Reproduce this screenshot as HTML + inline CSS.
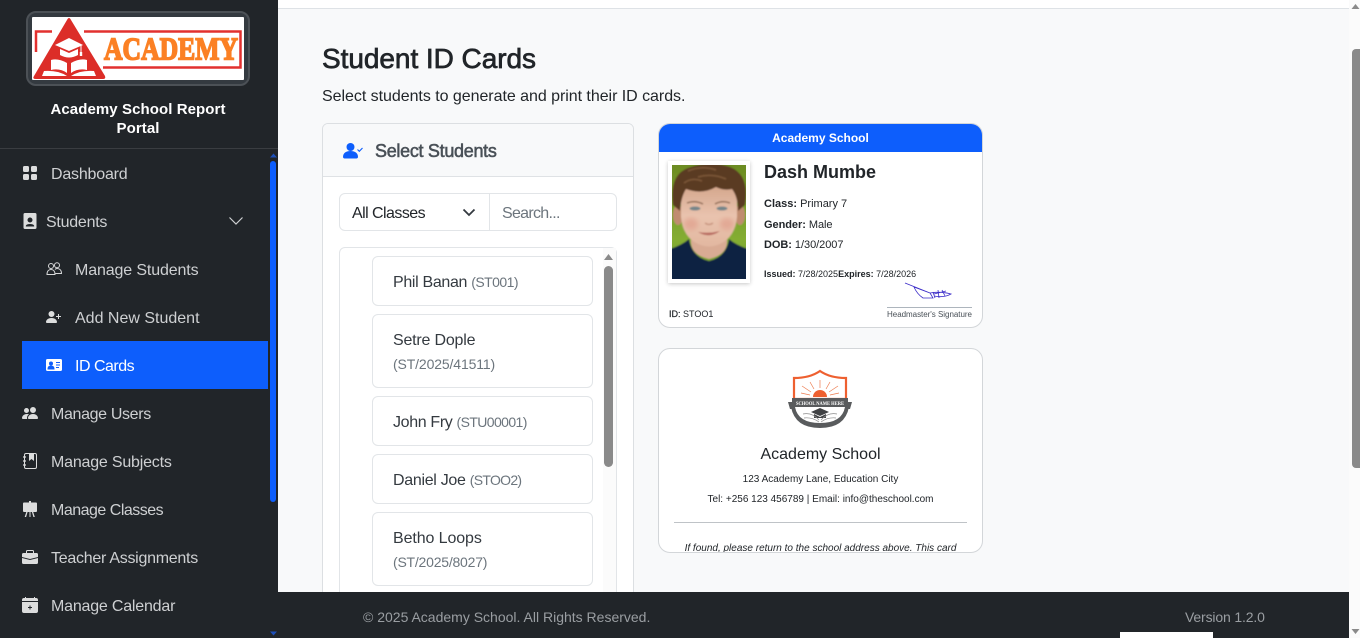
<!DOCTYPE html>
<html lang="en"><head><meta charset="utf-8"><title>Student ID Cards</title>
<style>
*{box-sizing:border-box}
html,body{margin:0;padding:0;width:1360px;height:638px;overflow:hidden;background:#f8f9fa;font-family:"Liberation Sans",Arial,sans-serif;color:#212529}
.a{position:absolute}
.t{position:absolute;white-space:nowrap;line-height:1}
.nav{font-size:16px;color:#ced0d2}
svg{position:absolute;display:block}
.item{position:absolute;left:372px;width:221px;background:#fff;border:1px solid #e2e5e8;border-radius:6px}
.n{font-size:16px;color:#343a40}
.c{font-size:14px;color:#6c757d}
</style></head><body>
<!-- top bar -->
<div class="a" style="left:278px;top:0;width:1074px;height:9px;background:#fff;border-bottom:1px solid #dee2e6"></div>
<!-- page scrollbar -->
<div class="a" style="left:1349px;top:0;width:11px;height:638px;background:#fbfbfb"></div>
<div class="a" style="left:1352px;top:49px;width:8px;height:419px;background:#8a8a8a;border-radius:4px 0 0 4px"></div>
<svg style="left:1351px;top:3px" width="9" height="7"><path d="M4.500 1L8.500 6H.5z" fill="#8a8a8a"/></svg>
<svg style="left:1351px;top:628px" width="9" height="7"><path d="M.5 1h8l-4 5z" fill="#8a8a8a"/></svg>

<!-- sidebar -->
<div class="a" style="left:0;top:0;width:278px;height:638px;background:#212529"></div>
<div class="a" style="left:0;top:148px;width:278px;height:1px;background:#3a3d41"></div>
<div class="a" style="left:26px;top:11px;width:224px;height:75px;background:#343a40;border:2px solid #4c5156;border-radius:10px"></div>
<svg style="left:32px;top:17px" width="212" height="63" viewBox="32 17 212 63">
<rect x="32" y="17" width="212" height="63" fill="#fff" rx="1"/>
<path d="M36 52V31.500H52M84 31.500H240.500V67.500H103" fill="none" stroke="#e2302f" stroke-width="2.500"/>
<path d="M69 18Q70 18 71 20L105 76Q106 79 103 79H36Q32 79 34 76L67 20Q68 18 69 18z" fill="#dc2d28"/>
<path d="M69 38L55 45 69 51 83 45z" fill="#fff"/>
<path d="M60 49V55Q69 60 78 55V49L69 53z" fill="#fff"/>
<path d="M81 45V53" stroke="#fff" stroke-width="1"/><rect x="79.800" y="52" width="2.400" height="4" fill="#fff"/>
<path d="M67 63Q58 58 51 60V70Q60 68 67 73zM71 63Q80 58 87 60V70Q78 68 71 73z" fill="#fff"/>
<path d="M44 71Q58 70 67 76H42zM94 71Q80 70 71 76H96z" fill="#fff"/>
<text x="104" y="59.500" font-family="Liberation Serif" font-weight="700" font-size="32" textLength="134" lengthAdjust="spacingAndGlyphs" fill="#fb8024" stroke="#fb8024" stroke-width="1.600">ACADEMY</text>
</svg>
<div class="t" style="left:0;width:276px;top:100px;text-align:center;color:#fff;font-size:15px;font-weight:700;line-height:19px;white-space:normal;padding:0 40px;letter-spacing:.08px">Academy School Report Portal</div>

<!-- sidebar scrollbar -->
<div class="a" style="left:270px;top:161px;width:6px;height:341px;background:#0d5efc;border-radius:3px"></div>
<svg style="left:269px;top:152px" width="9" height="7"><path d="M4.500 1.500L8 5.500H1z" fill="#1d4fb8"/></svg>
<svg style="left:269px;top:630px" width="9" height="7"><path d="M1 1.500h7L4.500 5.500z" fill="#1d4fb8"/></svg>

<div class="a" style="left:22px;top:341px;width:246px;height:48px;background:#0d5efc"></div>

<svg style="left:22px;top:165px" width="16" height="16" viewBox="0 0 16 16" fill="#dcdddd"><path d="M1 2.500A1.500 1.500 0 0 1 2.500 1h3A1.500 1.500 0 0 1 7 2.500v3A1.500 1.500 0 0 1 5.500 7h-3A1.500 1.500 0 0 1 1 5.500zm8 0A1.500 1.500 0 0 1 10.500 1h3A1.500 1.500 0 0 1 15 2.500v3A1.500 1.500 0 0 1 13.500 7h-3A1.500 1.500 0 0 1 9 5.500zm-8 8A1.500 1.500 0 0 1 2.500 9h3A1.500 1.500 0 0 1 7 10.500v3A1.500 1.500 0 0 1 5.500 15h-3A1.500 1.500 0 0 1 1 13.500zm8 0A1.500 1.500 0 0 1 10.500 9h3a1.500 1.500 0 0 1 1.500 1.500v3a1.500 1.500 0 0 1-1.500 1.500h-3A1.500 1.500 0 0 1 9 13.500z"/></svg>
<div class="t nav" style="left:51px;top:167px;letter-spacing:-.2px">Dashboard</div>

<svg style="left:22px;top:213px" width="16" height="16" viewBox="0 0 16 16" fill="#dcdddd"><path fill-rule="evenodd" d="M3 0h10a1.500 1.500 0 0 1 1.500 1.500v13A1.500 1.500 0 0 1 13 16H3a1.500 1.500 0 0 1-1.500-1.500v-13A1.500 1.500 0 0 1 3 0zm5 4.500A2.500 2.500 0 1 0 8 9.500 2.500 2.500 0 0 0 8 4.500zM4 13.500h8c.5 0 .5-2.500-4-2.500s-4.500 2.500-4 2.500z"/></svg>
<div class="t nav" style="left:46px;top:215px;letter-spacing:-.25px">Students</div>
<svg style="left:228px;top:213px" width="16" height="16" viewBox="0 0 16 16"><path d="M1.500 4.500L8 11l6.500-6.500" fill="none" stroke="#ced0d2" stroke-width="1.200"/></svg>

<svg style="left:46px;top:261px" width="16" height="16" viewBox="0 0 16 16" fill="none" stroke="#d6d7d8" stroke-width="1"><circle cx="5" cy="5" r="2.500"/><circle cx="11" cy="4.200" r="2.500"/><path d="M1 13.500c0-3.500 1.800-5 4-5s4 1.500 4 5zM9 8.500c.6-.8 1.300-1 2-1 2.500 0 4.500 1.500 4.500 5H9.500"/></svg>
<div class="t nav" style="left:75px;top:263px;letter-spacing:-.13px">Manage Students</div>

<svg style="left:46px;top:309px" width="16" height="16" viewBox="0 0 16 16" fill="#dcdddd"><path d="M1 14s-1 0-1-1 1-4 5.500-4 5.500 3 5.500 4-1 1-1 1zM5.500 8a3 3 0 1 0 0-6 3 3 0 0 0 0 6zM13 5v2h2v1h-2v2h-1V8h-2V7h2V5z"/></svg>
<div class="t nav" style="left:75px;top:311px">Add New Student</div>

<svg style="left:46px;top:357px" width="16" height="16" viewBox="0 0 16 16"><rect y="2" width="16" height="12" rx="1.500" fill="#fff"/><circle cx="5" cy="6.500" r="2" fill="#0d5efc"/><path d="M2 12c0-2 1.300-3 3-3s3 1 3 3zM10 5.500h4M10 8h4M10 10.500h3" stroke="#0d5efc" fill="#0d5efc" stroke-width="1"/></svg>
<div class="t" style="left:75px;top:359px;font-size:16px;color:#fff;letter-spacing:-.5px">ID Cards</div>

<svg style="left:22px;top:405px" width="16" height="16" viewBox="0 0 16 16" fill="#dcdddd"><path d="M7 14s-1 0-1-1 1-4 5-4 5 3 5 4-1 1-1 1zM11 8a3 3 0 1 0 0-6 3 3 0 0 0 0 6zM5.200 14A2.200 2.200 0 0 1 5 13c0-1.400.7-2.800 2-3.700C6.500 9.100 5.900 9 5 9c-4 0-5 3-5 4s1 1 1 1zM4.500 8a2.500 2.500 0 1 0 0-5 2.500 2.500 0 0 0 0 5z"/></svg>
<div class="t nav" style="left:51px;top:407px;letter-spacing:-.35px">Manage Users</div>

<svg style="left:22px;top:453px" width="16" height="16" viewBox="0 0 16 16"><rect x="2.500" y=".5" width="12" height="15" rx="1.500" fill="none" stroke="#dcdddd"/><path d="M7 .5h5V8L9.500 6 7 8z" fill="#dcdddd"/><path d="M1 4h3M1 8h3M1 12h3" stroke="#dcdddd" stroke-width="1.200"/></svg>
<div class="t nav" style="left:51px;top:455px;letter-spacing:-.2px">Manage Subjects</div>

<svg style="left:22px;top:501px" width="16" height="16" viewBox="0 0 16 16" fill="#dcdddd"><path d="M7 0h2v1.500h5a1 1 0 0 1 1 1V10a1 1 0 0 1-1 1h-2.800l1.600 5h-1.400l-1.500-5H8.500v5h-1v-5H5.600l-1.500 5H2.700l1.600-5H2a1 1 0 0 1-1-1V2.500a1 1 0 0 1 1-1h5z"/></svg>
<div class="t nav" style="left:51px;top:503px;letter-spacing:-.5px">Manage Classes</div>

<svg style="left:22px;top:549px" width="16" height="16" viewBox="0 0 16 16" fill="#dcdddd"><path d="M5.500 1h5A1.500 1.500 0 0 1 12 2.500V4h2.500A1.500 1.500 0 0 1 16 5.500V8L8 10 0 8V5.500A1.500 1.500 0 0 1 1.500 4H4V2.500A1.500 1.500 0 0 1 5.500 1zM5.500 2a.5.500 0 0 0-.5.500V4h6V2.500a.5.500 0 0 0-.5-.5zM0 9l8 2 8-2v4.500a1.500 1.500 0 0 1-1.500 1.500h-13A1.500 1.500 0 0 1 0 13.500z" fill-rule="evenodd"/></svg>
<div class="t nav" style="left:51px;top:551px;letter-spacing:-.27px">Teacher Assignments</div>

<svg style="left:22px;top:597px" width="16" height="16" viewBox="0 0 16 16" fill="#dcdddd"><path d="M4 0v1h8V0h1v1h1a2 2 0 0 1 2 2v1H0V3a2 2 0 0 1 2-2h1V0zM0 5h16v9a2 2 0 0 1-2 2H2a2 2 0 0 1-2-2zm7.500 3.500V10H6v1h1.500v1.500h1V11H10v-1H8.500V8.500z" fill-rule="evenodd"/></svg>
<div class="t nav" style="left:51px;top:599px;letter-spacing:-.2px">Manage Calendar</div>

<!-- heading -->
<div class="t" style="left:322px;top:45px;font-size:28px;font-weight:400;-webkit-text-stroke:.7px #212529;color:#212529;letter-spacing:-.05px">Student ID Cards</div>
<div class="t" style="left:322px;top:89px;font-size:16px;color:#212529;letter-spacing:-.04px">Select students to generate and print their ID cards.</div>

<!-- select card -->
<div class="a" style="left:322px;top:123px;width:312px;height:480px;background:#fff;border:1px solid #dcdfe2;border-radius:6px;overflow:hidden">
<div class="a" style="left:0;top:0;width:310px;height:53px;background:#f8f9fa;border-bottom:1px solid #dfe2e5"></div>
</div>
<svg style="left:343px;top:142px" width="20" height="18" viewBox="0 0 20 18" fill="#0d5efc"><circle cx="7.500" cy="5" r="4"/><path d="M0 15c0-4 3-6 7.500-6s7.500 2 7.500 6c0 1-1 1.500-1.500 1.500h-12C1 16.500 0 16 0 15z"/><path d="M14.500 7.500l1.800 1.800L19.500 6" fill="none" stroke="#0d5efc" stroke-width="1.100"/></svg>
<div class="t" style="left:375px;top:142px;font-size:18px;color:#495057;-webkit-text-stroke:.55px #495057;letter-spacing:-.3px">Select Students</div>

<div class="a" style="left:339px;top:193px;width:278px;height:38px;background:#fff;border:1px solid #e2e5e8;border-radius:6px"></div>
<div class="a" style="left:489px;top:193px;width:1px;height:38px;background:#e2e5e8"></div>
<div class="t" style="left:352px;top:206px;font-size:16px;color:#212529;letter-spacing:-.55px">All Classes</div>
<svg style="left:461px;top:204px" width="16" height="16" viewBox="0 0 16 16"><path d="M2.500 5.500L8 11l5.500-5.500" fill="none" stroke="#343a40" stroke-width="1.800"/></svg>
<div class="t" style="left:502px;top:206px;font-size:16px;color:#6c757d;letter-spacing:-.7px">Search...</div>

<div class="a" style="left:339px;top:247px;width:278px;height:360px;background:#fff;border:1px solid #e2e5e8;border-radius:6px"></div>
<div class="a" style="left:603px;top:248px;width:13px;height:344px;background:#fbfbfb"></div>
<div class="a" style="left:604px;top:266px;width:9px;height:201px;background:#8a8a8a;border-radius:5px"></div>
<svg style="left:603px;top:253px" width="11" height="8"><path d="M5.500 1L10 7H1z" fill="#8a8a8a"/></svg>

<div class="item" style="top:256px;height:50px"></div>
<div class="t n" style="left:393px;top:275px;letter-spacing:-.33px">Phil Banan <span class="c" style="letter-spacing:-.55px">(ST001)</span></div>
<div class="item" style="top:314px;height:74px"></div>
<div class="t n" style="left:393px;top:333px;letter-spacing:-.2px">Setre Dople</div>
<div class="t c" style="left:393px;top:357px;letter-spacing:-.13px">(ST/2025/41511)</div>
<div class="item" style="top:396px;height:50px"></div>
<div class="t n" style="left:393px;top:415px;letter-spacing:-.35px">John Fry <span class="c" style="letter-spacing:-.6px">(STU00001)</span></div>
<div class="item" style="top:454px;height:50px"></div>
<div class="t n" style="left:393px;top:473px;letter-spacing:-.3px">Daniel Joe <span class="c" style="letter-spacing:-.7px">(STOO2)</span></div>
<div class="item" style="top:512px;height:74px"></div>
<div class="t n" style="left:393px;top:531px;letter-spacing:-.1px">Betho Loops</div>
<div class="t c" style="left:393px;top:555px;letter-spacing:-.22px">(ST/2025/8027)</div>

<!-- ID front -->
<div class="a" style="left:658px;top:123px;width:325px;height:205px;background:#fff;border:1px solid #d3d6d9;border-radius:12px;overflow:hidden">
<div class="a" style="left:0;top:0;width:325px;height:28px;background:#0d5efc"></div>
</div>
<div class="t" style="left:658px;width:325px;top:132px;text-align:center;color:#fff;font-size:12px;font-weight:700">Academy School</div>
<div class="a" style="left:668px;top:161px;width:82px;height:122px;background:#fff;box-shadow:0 1px 4px rgba(0,0,0,.22)"></div>
<svg style="left:672px;top:165px" width="74" height="114" viewBox="0 0 74 114">
<defs><filter id="b" x="-10%" y="-10%" width="120%" height="120%"><feGaussianBlur stdDeviation=".8"/></filter>
<filter id="b2" x="-20%" y="-20%" width="140%" height="140%"><feGaussianBlur stdDeviation="2.500"/></filter>
<linearGradient id="g" x1="0" y1="0" x2="0" y2="1"><stop offset="0" stop-color="#6b8a22"/><stop offset=".65" stop-color="#84ad32"/><stop offset="1" stop-color="#6f9a2c"/></linearGradient>
<linearGradient id="s" x1="0" y1="0" x2="0" y2="1"><stop offset="0" stop-color="#d3a58b"/><stop offset=".5" stop-color="#e9c3ae"/><stop offset="1" stop-color="#e2b7a0"/></linearGradient></defs>
<g filter="url(#b)">
<rect x="-2" y="-2" width="78" height="118" fill="url(#g)"/>
<path d="M-2 84Q10 80 17 74 20 92 37 96 54 92 57 74 64 80 76 84V116H-2z" fill="#0f2442"/>
<path d="M19 64H55V78Q54 90 37 94 20 90 19 78z" fill="#d9ab94"/>
<ellipse cx="6" cy="50" rx="5" ry="10" fill="#c08c70"/>
<ellipse cx="68" cy="50" rx="5" ry="10" fill="#c08c70"/>
<path d="M9 20H65V52Q63 72 48 79 37 84 26 79 11 72 9 52z" fill="url(#s)"/>
<ellipse cx="19" cy="59" rx="7" ry="6" fill="#e2a995" filter="url(#b2)"/><ellipse cx="55" cy="59" rx="7" ry="6" fill="#e2a995" filter="url(#b2)"/>
<path d="M1 40Q-3 10 16 3 38-5 58 2 78 10 73 40L66 46Q66 32 60 24 52 26 44 22 30 30 14 24 9 32 8 46z" fill="#5a3a24"/>
<path d="M16 6Q30 0 44 5M26 12Q40 8 54 14M12 18Q20 12 30 16" stroke="#7d5838" stroke-width="1.500" fill="none"/>
<path d="M15 38Q23 35 31 39M43 39Q50 35 58 38" stroke="#8a6650" stroke-width="1.300" fill="none"/>
<ellipse cx="23" cy="43.500" rx="5.500" ry="2" fill="#74858a"/><ellipse cx="50" cy="43.500" rx="5.500" ry="2" fill="#74858a"/>
<path d="M33 58Q37 61 41 58" stroke="#c99680" stroke-width="1.500" fill="none"/>
<path d="M26 67Q37 69 48 66 37 74 26 67z" fill="#b8695f"/>
</g></svg>
<div class="t" style="left:764px;top:163px;font-size:18px;font-weight:700;color:#212529">Dash Mumbe</div>
<div class="t" style="left:764px;top:199px;font-size:11px"><b>Class:</b> Primary 7</div>
<div class="t" style="left:764px;top:220px;font-size:11px;letter-spacing:-.05px"><b>Gender:</b> Male</div>
<div class="t" style="left:764px;top:240px;font-size:11px;letter-spacing:-.05px"><b>DOB:</b> 1/30/2007</div>
<div class="t" style="left:764px;top:270px;font-size:9px"><b>Issued:</b> 7/28/2025<b>Expires:</b> 7/28/2026</div>
<svg style="left:900px;top:278px" width="56" height="26" viewBox="0 0 56 26" fill="none" stroke="#3a2bc8" stroke-width=".8"><path d="M5 5L30 15 14 9Q17 16 23 20H33L30 15Q40 13 51 16 44 20 34 18M33 14l2 6M38 12l1 8M42 12l3 6M34 16l12-3"/></svg>
<div class="a" style="left:887px;top:307px;width:85px;height:1px;background:#adb5bd"></div>
<div class="t" style="left:887px;width:85px;top:311px;text-align:center;font-size:8px;color:#495057;letter-spacing:-.03px">Headmaster's Signature</div>
<div class="t" style="left:669px;top:310px;font-size:9px"><b style="font-weight:400;-webkit-text-stroke:.2px #212529">ID:</b> STOO1</div>

<!-- ID back -->
<div class="a" style="left:658px;top:348px;width:325px;height:205px;background:#fff;border:1px solid #d3d6d9;border-radius:12px;overflow:hidden">
<div class="t" style="left:0;width:323px;top:195px;text-align:center;font-size:10px;font-style:italic;color:#212529;white-space:nowrap">If found, please return to the school address above. This card</div>
</div>
<svg style="left:786px;top:369px" width="68" height="60" viewBox="786 369 68 60">
<path d="M794 378Q810 378 820 371 830 378 846 378V399H794z" fill="#fff" stroke="#ee6030" stroke-width="2.200"/>
<path d="M813 397a7 7 0 0 1 14 0z" fill="#ee6030"/>
<path d="M820 388V380M814 389L810 382M826 389L830 382M811 392L802 386M829 392L838 386M810 395L801 393M830 395L839 393" stroke="#ee7c50" stroke-width=".7"/>
<path d="M788 402L793 402V409H790zM852 402L847 402V409H850z" fill="#595b5d"/>
<rect x="792" y="398" width="56" height="9" fill="#595b5d"/>
<text x="820" y="405" font-size="5.500" text-anchor="middle" fill="#fff" font-weight="700" font-family="Liberation Serif" textLength="48" lengthAdjust="spacingAndGlyphs">SCHOOL NAME HERE</text>
<path d="M791 407Q795 428 820 428 845 428 849 407H845Q842 423 820 423 798 423 795 407z" fill="#595b5d"/>
<path d="M820 408L811 412 820 416 829 412z" fill="#3f4143"/><path d="M814 414V418H826V414L820 417z" fill="#3f4143"/>
<path d="M803 414Q812 412 819 420M837 414Q828 412 821 420M804 418Q812 417 819 422M836 418Q828 417 821 422" fill="none" stroke="#8a8a8a" stroke-width=".7"/>
</svg>
<div class="t" style="left:658px;width:325px;top:447px;text-align:center;font-size:16px;color:#212529">Academy School</div>
<div class="t" style="left:658px;width:325px;top:475px;text-align:center;font-size:10px;color:#212529">123 Academy Lane, Education City</div>
<div class="t" style="left:658px;width:325px;top:495px;text-align:center;font-size:10px;color:#212529">Tel: +256 123 456789 | Email: info@theschool.com</div>
<div class="a" style="left:674px;top:522px;width:293px;height:1px;background:#bfc3c7"></div>

<!-- footer -->
<div class="a" style="left:278px;top:592px;width:1071px;height:46px;background:#212529"></div>
<div class="t" style="left:363px;top:610px;font-size:14px;color:#9a9ea2">© 2025 Academy School. All Rights Reserved.</div>
<div class="t" style="left:1185px;top:610px;font-size:14px;color:#9a9ea2;letter-spacing:-.15px">Version 1.2.0</div>
<div class="a" style="left:1120px;top:632px;width:93px;height:6px;background:#fff"></div>
</body></html>
